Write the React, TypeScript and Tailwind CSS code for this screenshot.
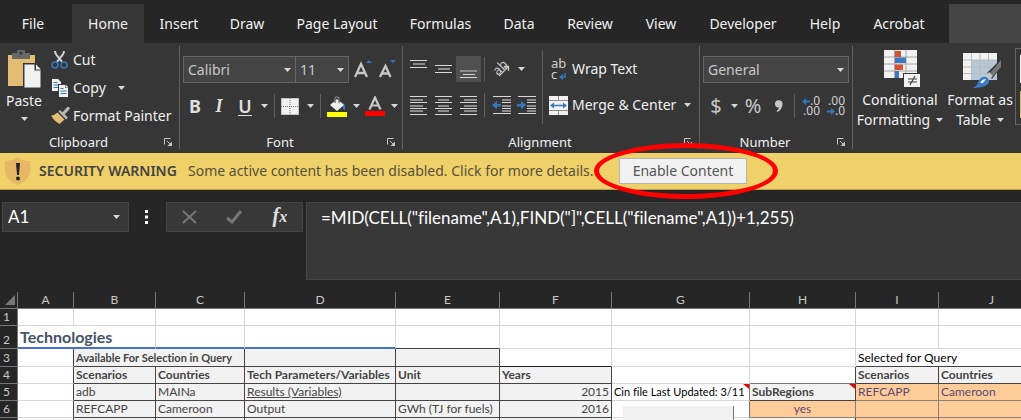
import type { ReactNode } from "react";

type Tab = { name: string; width: string };

const tabs: Tab[] = [
  { name: "File", width: "w-[66px] mr-[6px]" },
  { name: "Home", width: "w-[72px]" },
  { name: "Insert", width: "w-[70px]" },
  { name: "Draw", width: "w-[66px]" },
  { name: "Page Layout", width: "w-[114px]" },
  { name: "Formulas", width: "w-[93px]" },
  { name: "Data", width: "w-[64px]" },
  { name: "Review", width: "w-[78px]" },
  { name: "View", width: "w-[64px]" },
  { name: "Developer", width: "w-[100px]" },
  { name: "Help", width: "w-[64px]" },
  { name: "Acrobat", width: "w-[84px]" },
];

function Caret() {
  return (
    <svg width="7" height="4" viewBox="0 0 7 4" className="shrink-0" aria-hidden="true">
      <path d="M0 0h7L3.5 4z" fill="#d8d8d8" />
    </svg>
  );
}

function Launcher({ label }: { label: string }) {
  return (
    <button aria-label={label} className="absolute right-1.5 top-[5px]">
      <svg width="9" height="9" viewBox="0 0 9 9" fill="none" stroke="#c8c8c8">
        <path d="M.5 6.5v-6h6M3 3l4 4" />
        <path d="M8 3.5V8H3.5z" fill="#c8c8c8" stroke="none" />
      </svg>
    </button>
  );
}

function Group({ label, className, children }: { label: string; className: string; children: ReactNode }) {
  return (
    <section aria-label={label} className={`flex shrink-0 flex-col ${className}`}>
      <div className="h-[87px]">{children}</div>
      <div className="relative h-[18px] pr-[22px] text-center text-[13px] leading-[18px]">
        {label}
        <Launcher label={`${label} settings`} />
      </div>
    </section>
  );
}

function Divider({ className }: { className: string }) {
  return <div className={`w-px shrink-0 bg-[#5f5f5f] ${className}`} />;
}

function Choice({ label, value, className }: { label: string; value: string; className: string }) {
  return (
    <label className={`relative flex h-[27px] items-center border border-[#666] bg-[#444] ${className}`}>
      <select aria-label={label} className="h-full w-full appearance-none bg-transparent pl-1 text-sm text-[#c8c8c8] outline-none">
        <option>{value}</option>
      </select>
      <span className="pointer-events-none absolute right-1">
        <Caret />
      </span>
    </label>
  );
}

function Lines({ rows }: { rows: [number, number, number, boolean][] }) {
  return (
    <svg width="17" height="19" viewBox="0 0 17 19" aria-hidden="true">
      {rows.map(([y, x, w, dim]) => (
        <rect key={y} x={x} y={y} width={w} height={dim ? 2 : 1} fill={dim ? "#8c8c8c" : "#d8d8d8"} />
      ))}
    </svg>
  );
}

function LetterButton({ label, className, children }: { label: string; className: string; children: ReactNode }) {
  return (
    <button aria-label={label} className={`flex h-[26px] shrink-0 items-center justify-center ${className}`}>
      {children}
    </button>
  );
}

function PasteIcon() {
  return (
    <svg width="36" height="39" viewBox="0 0 36 39" aria-hidden="true">
      <path d="M2 5h27v31H2z" fill="#e3bd74" />
      <path d="M6 3h5V1q0-1 1-1h6q1 0 1 1v2h5v6H6z" fill="#686868" />
      <circle cx="15" cy="3" r="1.5" fill="#363636" />
      <path d="M17 13h13l6 6v19H17z" fill="#363636" />
      <path d="M18.500 14.500h10v6h6v17h-16z" fill="#f1f1f1" />
      <path d="M30 14.500v5h5z" fill="#f1f1f1" />
    </svg>
  );
}

function CutIcon() {
  return (
    <svg width="18" height="18" viewBox="0 0 18 18" fill="none" aria-hidden="true">
      <path d="M4 0c0 4 4 6 7 11M13 0c0 4-4 6-7 11" stroke="#cfcfcf" strokeWidth="2" />
      <circle cx="4" cy="14" r="3" stroke="#3577bd" strokeWidth="1.500" />
      <circle cx="13" cy="14" r="3" stroke="#3577bd" strokeWidth="1.500" />
    </svg>
  );
}

function CopyIcon() {
  return (
    <svg width="18" height="18" viewBox="0 0 18 18" aria-hidden="true">
      <path d="M1 0h6l3 3v9H1z" fill="#f1f1f1" />
      <path d="M2.500 3.500h4M2.500 6h6M2.500 8.500h6" stroke="#3577bd" />
      <path d="M7 5h8l3 3v10H7z" fill="#363636" />
      <path d="M8 6h6v3h3v9H8z" fill="#f1f1f1" />
      <path d="M14.500 5.500V8.500H17.500z" fill="#f1f1f1" />
      <path d="M9.500 9.500h3M9.500 12h6M9.500 14.500h6" stroke="#3577bd" />
    </svg>
  );
}

function PainterIcon() {
  return (
    <svg width="19" height="17" viewBox="0 0 19 17" aria-hidden="true">
      <path d="M0 8.500Q4 8 6.500 5.500L13.500 12.500 8.500 17Q3 14 0 8.500z" fill="#e3bd74" />
      <path d="M7.500 4.500l1.500-1.500 8 7.500-2 2z" fill="#b8b8b8" />
      <path d="M12.500 6.500l4.500-5" stroke="#b8b8b8" strokeWidth="3.200" strokeLinecap="round" />
    </svg>
  );
}

function ClipboardGroup() {
  return (
    <Group label="Clipboard" className="w-[179px]">
      <div className="flex h-full">
        <button className="flex w-[48px] shrink-0 flex-col items-center pt-1 text-sm leading-5">
          <PasteIcon />
          <span className="mt-0.5">Paste</span>
          <span className="mt-1.5 flex"><Caret /></span>
        </button>
        <div className="flex flex-col pl-[3px] text-sm">
          <button className="flex h-[28px] items-center gap-1"><CutIcon /> Cut</button>
          <button className="flex h-[28px] items-center gap-1"><CopyIcon /> Copy <span className="ml-2"><Caret /></span></button>
          <button className="flex h-[27px] items-center gap-[3px] whitespace-nowrap"><PainterIcon /> Format Painter</button>
        </div>
      </div>
    </Group>
  );
}

function BordersIcon() {
  return (
    <svg width="18" height="17" viewBox="0 0 18 17" aria-hidden="true">
      <path d="M0 0h18v17H0z" fill="#f1f1f1" />
      <path d="M9 0v17M0 8.500h18" stroke="#777" strokeDasharray="1 1" />
      <path d="M.5.5h17v16H.5z" fill="none" stroke="#999" strokeDasharray="1 1" />
    </svg>
  );
}

function FillIcon() {
  return (
    <svg width="20" height="21" viewBox="0 0 20 21" aria-hidden="true">
      <path d="M0 16h20v5H0z" fill="#ff0" />
      <path d="M14 6q5 1 4 8l-2-1q0-4-3-5z" fill="#3577bd" />
      <path d="M3 9l7-6 7 6-7 6z" fill="#efefef" />
      <path d="M8 7V3q0-2 2-2t2 2v4" fill="none" stroke="#777" strokeWidth="1.500" />
    </svg>
  );
}

function FontColorIcon() {
  return (
    <svg width="20" height="20" viewBox="0 0 20 20" aria-hidden="true">
      <path d="M4.500 13.500L10 1.500l5.500 12M6.500 9.500h7" fill="none" stroke="#c8c8c8" strokeWidth="2.200" />
      <path d="M0 15h20v5H0z" fill="red" />
    </svg>
  );
}

function SizeIcon({ grow }: { grow: boolean }) {
  return (
    <svg width="19" height="20" viewBox="0 0 19 20" fill="none" aria-hidden="true">
      <path d={grow ? "M1 18L7 5l6 13M3.5 14h7" : "M2 18L7.500 7l5 11M4 14.500h7"} stroke="#c8c8c8" strokeWidth="2.300" />
      <path d={grow ? "M12 4h6l-3-3z" : "M12 1h6l-3 3z"} fill="#3577bd" />
    </svg>
  );
}

function FontGroup() {
  return (
    <Group label="Font" className="w-[222px]">
      <div className="flex h-full flex-col pl-[3px] pt-[10px]">
        <div className="flex">
          <Choice label="Font name" value="Calibri" className="w-[113px]" />
          <Choice label="Font size" value="11" className="-ml-px w-[54px]" />
          <LetterButton label="Increase font size" className="ml-1 w-[20px]"><SizeIcon grow /></LetterButton>
          <LetterButton label="Decrease font size" className="ml-1 w-[20px]"><SizeIcon grow={false} /></LetterButton>
        </div>
        <div className="mt-[10px] flex items-center text-lg leading-6 text-[#dedede]">
          <LetterButton label="Bold" className="w-6"><b>B</b></LetterButton>
          <LetterButton label="Italic" className="w-6"><i className="font-['Liberation_Serif',serif] font-bold">I</i></LetterButton>
          <LetterButton label="Underline" className="w-7"><span className="border-b leading-[18px] font-semibold">U</span></LetterButton>
          <LetterButton label="Underline style" className="w-[10px]"><Caret /></LetterButton>
          <Divider className="ml-[5px] h-6" />
          <LetterButton label="Borders" className="ml-[6px] w-[18px]"><BordersIcon /></LetterButton>
          <LetterButton label="Border style" className="ml-[6px] w-[10px]"><Caret /></LetterButton>
          <Divider className="ml-[5px] h-6" />
          <LetterButton label="Fill color" className="ml-[6px] w-[20px]"><FillIcon /></LetterButton>
          <LetterButton label="Fill options" className="ml-1 w-[10px]"><Caret /></LetterButton>
          <LetterButton label="Font color" className="ml-1 w-[20px]"><FontColorIcon /></LetterButton>
          <LetterButton label="Font color options" className="ml-1 w-[10px]"><Caret /></LetterButton>
        </div>
      </div>
    </Group>
  );
}

function IndentIcon({ out }: { out: boolean }) {
  return (
    <svg width="19" height="19" viewBox="0 0 19 19" aria-hidden="true">
      <path d="M1 .5h18M10 6.500h9M10 12.500h9M1 17.500h18" stroke="#d8d8d8" />
      <path d="M10 4h9M10 10h9M10 15h9" stroke="#8c8c8c" strokeWidth="2" />
      <path d={out ? "M0 9l5-4v3h4v2.500H5v3z" : "M9 9L4 5v3H0v2.500h4v3z"} fill="#3577bd" />
    </svg>
  );
}

function MergeIcon() {
  return (
    <svg width="19" height="19" viewBox="0 0 19 19" aria-hidden="true">
      <path d="M0 0h19v19H0z" fill="#f1f1f1" />
      <path d="M0 4.500h19M0 14.500h19M9.500 0v4M9.500 15v4" stroke="#8c8c8c" />
      <path d="M3 9.500h13" stroke="#3577bd" strokeWidth="1.500" />
      <path d="M1 9.500L5 6.500v6zM18 9.500L14 6.500v6z" fill="#3577bd" />
    </svg>
  );
}

function AlignmentGroup() {
  return (
    <Group label="Alignment" className="w-[296px]">
      <div className="flex h-full">
        <div className="flex w-[139px] flex-col pl-[3px] pt-[10px]">
          <div className="flex items-center">
            <LetterButton label="Top align" className="w-[25px]"><Lines rows={[[0, 0, 17, false], [3, 3, 12, true], [7, 0, 17, false]]} /></LetterButton>
            <LetterButton label="Middle align" className="w-[25px]"><Lines rows={[[5, 0, 17, false], [8, 3, 12, true], [12, 0, 17, false]]} /></LetterButton>
            <LetterButton label="Bottom align" className="w-[25px] bg-[#505050]"><Lines rows={[[10, 0, 17, true], [14, 3, 12, false], [17, 0, 17, false]]} /></LetterButton>
            <Divider className="ml-[3px] h-6" />
            <LetterButton label="Orientation" className="relative ml-[7px] w-[20px] text-[13px] leading-4 text-[#c8c8c8]">
              <span className="-mt-1 mr-1 block -rotate-45">ab</span>
              <svg width="12" height="12" viewBox="0 0 12 12" fill="none" stroke="#c8c8c8" strokeWidth="1.300" className="absolute bottom-[5px] right-0.5" aria-hidden="true">
                <path d="M1 11L11 1M6 1.500h4.500V6" />
              </svg>
            </LetterButton>
            <LetterButton label="Orientation options" className="ml-1 w-[10px]"><Caret /></LetterButton>
          </div>
          <div className="mt-[10px] flex items-center">
            <LetterButton label="Align left" className="w-[25px]"><Lines rows={[[0, 0, 17, false], [3, 0, 13, true], [6, 0, 17, false], [9, 0, 13, true], [12, 0, 17, false], [14, 0, 13, true], [18, 0, 17, false]]} /></LetterButton>
            <LetterButton label="Center" className="w-[25px]"><Lines rows={[[0, 0, 17, false], [3, 3, 11, true], [6, 0, 17, false], [9, 3, 11, true], [12, 0, 17, false], [14, 3, 11, true], [18, 0, 17, false]]} /></LetterButton>
            <LetterButton label="Align right" className="w-[25px]"><Lines rows={[[0, 0, 17, false], [3, 4, 13, true], [6, 0, 17, false], [9, 4, 13, true], [12, 0, 17, false], [14, 4, 13, true], [18, 0, 17, false]]} /></LetterButton>
            <Divider className="ml-[3px] h-6" />
            <LetterButton label="Decrease indent" className="ml-[6px] w-[20px]"><IndentIcon out /></LetterButton>
            <LetterButton label="Increase indent" className="ml-[5px] w-[20px]"><IndentIcon out={false} /></LetterButton>
          </div>
        </div>
        <Divider className="mt-[5px] h-[73px]" />
        <div className="flex flex-col pl-[6px] pt-[10px] text-sm">
          <button className="flex h-[26px] items-center gap-1">
            <span className="relative w-[19px] pl-[2px] text-left text-[13px] leading-[11px] text-[#d0d0d0]">
              ab<br />c
              <svg width="7" height="7" viewBox="0 0 7 7" className="absolute bottom-0 right-[2px]" aria-hidden="true">
                <path d="M6 0v4H3" fill="none" stroke="#3577bd" strokeWidth="1.500" />
                <path d="M0 4l4-3v6z" fill="#3577bd" />
              </svg>
            </span>
            Wrap Text
          </button>
          <button className="mt-[10px] flex h-[26px] items-center gap-1 whitespace-nowrap">
            <MergeIcon /> Merge &amp; Center <span className="ml-1"><Caret /></span>
          </button>
        </div>
      </div>
    </Group>
  );
}

function DecimalIcon({ more }: { more: boolean }) {
  const arrow = (
    <svg width="8" height="7" viewBox="0 0 8 7" className="shrink-0" aria-hidden="true">
      <path d={more ? "M0 3.500L4 0v2.500h4v2H4V7z" : "M8 3.500L4 0v2.500H0v2h4V7z"} fill="#3577bd" />
    </svg>
  );
  return (
    <span className="flex flex-col items-end text-xs leading-[10px] text-[#d0d0d0]">
      <span className="flex items-center">{more && arrow}{more ? ".0" : ".00"}</span>
      <span className="flex items-center">{!more && arrow}{more ? ".00" : ".0"}</span>
    </span>
  );
}

function NumberGroup() {
  return (
    <Group label="Number" className="w-[152px]">
      <div className="flex h-full flex-col pl-[3px] pt-[10px]">
        <Choice label="Number format" value="General" className="w-[146px]" />
        <div className="mt-[10px] flex items-center text-xl text-[#c8c8c8]">
          <LetterButton label="Accounting format" className="w-[26px]">$</LetterButton>
          <LetterButton label="Accounting options" className="w-[10px]"><Caret /></LetterButton>
          <LetterButton label="Percent style" className="w-[28px]">%</LetterButton>
          <LetterButton label="Comma style" className="w-[24px]">
            <svg width="8" height="12" viewBox="0 0 8 12" aria-hidden="true">
              <path d="M0 4a3.700 3.700 0 0 1 7.500 0q0 5-5 8l-1-1q2.500-2 2.500-3.500Q0 7.500 0 4z" fill="#c8c8c8" />
            </svg>
          </LetterButton>
          <Divider className="ml-[3px] h-6" />
          <LetterButton label="Increase decimal" className="ml-1 w-[24px]"><DecimalIcon more /></LetterButton>
          <LetterButton label="Decrease decimal" className="w-[26px]"><DecimalIcon more={false} /></LetterButton>
        </div>
      </div>
    </Group>
  );
}

function StylesGroup() {
  return (
    <section aria-label="Styles" className="flex min-w-0 flex-1 overflow-hidden text-sm leading-5">
      <button className="flex w-[94px] shrink-0 flex-col items-center pt-1">
        <svg width="36" height="38" viewBox="0 0 36 38" className="ml-1" aria-hidden="true">
          <path d="M0 0h33v28H0z" fill="#f1f1f1" />
          <path d="M0 7h33M0 14h33M0 21h33M10.500 0v28M22 0v28" stroke="#a8a8a8" />
          <path d="M11 1h6v6h-6zM11 14.500h8V20h-8z" fill="#d35230" />
          <path d="M11 7.500h11V13H11zM11 21h4v7h-4z" fill="#3a7bc4" />
          <path d="M19 23h17v15H19z" fill="#363636" />
          <path d="M20 24h16v13H20z" fill="#f1f1f1" />
          <path d="M24 29h9M24 32h9M31 26l-5 9" stroke="#444" strokeWidth="1.200" />
        </svg>
        <span className="mt-0.5">Conditional</span>
        <span className="flex items-center gap-1.5">Formatting <Caret /></span>
      </button>
      <button className="flex w-[66px] shrink-0 flex-col items-center whitespace-nowrap pt-1">
        <svg width="38" height="38" viewBox="0 0 38 38" className="ml-1" aria-hidden="true">
          <path d="M0 3h34v27H0z" fill="#f1f1f1" />
          <path d="M9 10h25v20H9z" fill="#b5c8da" />
          <path d="M0 10h34M0 17h34M0 23.500h34M8.500 3v27M17 3v27M25.500 3v27" stroke="#bbb" />
          <path d="M38 9L24 23l5 6 9-12z" fill="#363636" />
          <path d="M38 10L27 23l3 3 8-9z" fill="#777" />
          <path d="M26 22l-3 4 4 3 3-3z" fill="#c8c8c8" />
          <path d="M9 38q5-1 6-6 3-6 8-5 5 3 2 7-4 4-16 4z" fill="#3a7bc4" />
          <path d="M17 33q2-4 6-4l-3 4z" fill="#f1f1f1" />
        </svg>
        <span className="mt-0.5">Format as</span>
        <span className="flex items-center gap-1.5">Table <Caret /></span>
      </button>
      <div className="ml-[2px] mt-[2px] flex h-[77px] flex-1 flex-col gap-2 border border-r-0 border-[#666] py-[6px] pl-1">
        <div className="flex-1 bg-[#f1f1f1]" />
        <div className="flex-1 bg-[#d8bc6c]" />
      </div>
    </section>
  );
}

function SecurityBar() {
  return (
    <div className="flex h-[37px] shrink-0 items-center border-b border-[#b89f55] bg-[#f0d068] pl-[5px] text-sm text-[#55513f]">
      <svg width="25" height="28" viewBox="0 0 25 28" className="shrink-0" aria-hidden="true">
        <path d="M12.500 0Q17 4 25 4v9q0 10-12.500 15Q0 23 0 13V4q8 0 12.500-4z" fill="#e6b866" />
        <path d="M11 6h4l-1 12h-2z" fill="#262626" />
        <circle cx="13" cy="21.500" r="2" fill="#262626" />
      </svg>
      <strong className="ml-[9px] w-[149px] shrink-0 whitespace-nowrap font-semibold text-[#444]">SECURITY WARNING</strong>
      <a href="#details" className="w-[431px] shrink-0 whitespace-nowrap">Some active content has been disabled. Click for more details.</a>
      <div className="relative shrink-0">
        <button className="block h-[26px] w-[128px] border border-[#b5b5b5] bg-[#f1f1f1] leading-5 text-[#555]">Enable Content</button>
        <div className="pointer-events-none absolute -left-[25px] -top-[15px] h-[56px] w-[184px] rounded-[50%] border-[5px] border-[#ff0000]" />
      </div>
    </div>
  );
}

function FormulaBar() {
  return (
    <div className="flex shrink-0 items-start pb-3 pl-[2px] pt-3 font-['Lato',sans-serif] text-white">
      <label className="relative flex h-[30px] w-[127px] shrink-0 items-center border border-[#444] bg-[#383838]">
        <input aria-label="Name box" defaultValue="A1" className="w-full bg-transparent pl-[5px] text-[17px] leading-6 outline-none" />
        <span className="absolute right-2"><Caret /></span>
      </label>
      <svg width="3" height="14" viewBox="0 0 3 14" className="ml-4 mt-2 shrink-0" aria-hidden="true">
        <path d="M0 0h3v3H0zM0 5.500h3v3H0zM0 11h3v3H0z" fill="#fff" />
      </svg>
      <div className="ml-[18px] flex h-[30px] w-[137px] shrink-0 items-center justify-around border border-[#444] bg-[#383838]">
        <button aria-label="Cancel">
          <svg width="15" height="14" viewBox="0 0 15 14" fill="none" stroke="#777" strokeWidth="2"><path d="M1 1l13 12M14 1L1 13" /></svg>
        </button>
        <button aria-label="Enter">
          <svg width="17" height="14" viewBox="0 0 17 14" fill="none" stroke="#777" strokeWidth="3"><path d="M1 8l5 4L15 1" /></svg>
        </button>
        <button className="font-['Liberation_Serif',serif] text-xl font-bold italic leading-5 text-[#e0e0e0]">f<span className="text-base">x</span></button>
      </div>
      <textarea
        aria-label="Formula"
        defaultValue={'=MID(CELL("filename",A1),FIND("]",CELL("filename",A1))+1,255)'}
        className="ml-[3px] block h-[78px] min-w-0 flex-1 resize-none border border-r-0 border-[#444] bg-[#383838] px-[14px] py-[3px] text-[17px] leading-6 outline-none [font-variant-ligatures:none]"
      />
    </div>
  );
}

const columns = ["A", "B", "C", "D", "E", "F", "G", "H", "I", "J"];
const light = "border-[#d6d6d6] bg-white";
const boxed = "border-[#444] bg-[#f2f2f2] text-[#444]";
const boxedRight = "border-[#444] bg-[#f2f2f2] text-[#444] text-right";
const heading = "border-[#444] bg-[#f2f2f2] text-[#444] font-bold";
const orange = "border-[#8a8175] bg-[#ffcc99] text-[#5a4a72]";
const orangeCenter = "border-[#8a8175] bg-[#ffcc99] text-[#5a4a72] text-center";
const edge = "border-b-[#d6d6d6] border-r-[#444] bg-white";
const titleCell = "border-b-2 border-b-[#4472c4] border-r-[#d6d6d6] bg-white";

function Cell({ className = light, span, children }: { className?: string; span?: number; children?: ReactNode }) {
  return <td colSpan={span} className={`relative whitespace-nowrap border-b border-r px-[2px] py-0 ${className}`}>{children}</td>;
}

function RowHead({ n }: { n?: number }) {
  return <th scope="row" className="border-b border-r border-[#777] bg-[#262626] p-0 pr-1 text-center align-bottom font-normal text-[#c8c8c8]">{n}</th>;
}

function Blanks({ count }: { count: number }) {
  return <>{Array.from({ length: count }, (_, i) => <Cell key={i} />)}</>;
}

function NoteMark() {
  return (
    <svg width="6" height="5" viewBox="0 0 6 5" className="absolute right-0 top-0" aria-hidden="true">
      <path d="M0 0h6v5z" fill="#e00" />
    </svg>
  );
}

function Sheet() {
  return (
    <table className="w-[1045px] table-fixed border-separate border-spacing-0 font-['Lato',sans-serif] text-xs leading-4 text-black [font-variant-ligatures:none]">
      <colgroup>
        <col className="w-[18px]" /><col className="w-[56px]" /><col className="w-[82px]" /><col className="w-[89px]" /><col className="w-[151px]" />
        <col className="w-[104px]" /><col className="w-[112px]" /><col className="w-[138px]" /><col className="w-[106px]" /><col className="w-[83px]" /><col className="w-[106px]" />
      </colgroup>
      <thead>
        <tr className="h-[17px] bg-[#262626] text-[#c8c8c8]">
          <th className="border-b border-r border-[#777] p-0">
            <svg width="10" height="10" viewBox="0 0 10 10" className="ml-[5px]" aria-hidden="true"><path d="M10 0v10H0z" fill="#777" /></svg>
          </th>
          {columns.map((c) => <th key={c} scope="col" className="border-b border-r border-[#777] p-0 font-normal">{c}</th>)}
        </tr>
      </thead>
      <tbody>
        <tr className="h-[17px]"><RowHead n={1} /><Blanks count={10} /></tr>
        <tr className="h-[23px]">
          <RowHead n={2} />
          <Cell span={2} className={`${titleCell} text-base font-bold leading-5 text-[#44546a]`}>Technologies</Cell>
          <Cell className={titleCell} />
          <Cell className={titleCell} />
          <Cell className="border-b-[#444] border-r-[#d6d6d6] bg-white" />
          <Blanks count={5} />
        </tr>
        <tr className="h-[18px]">
          <RowHead n={3} />
          <Cell className={edge} />
          <Cell span={2} className={heading}><span className="text-[11px]">Available For Selection in Query</span></Cell>
          <Cell className={boxed} /><Cell className={boxed} />
          <Cell className="border-b-[#222] border-r-[#d6d6d6] bg-white" />
          <Blanks count={2} />
          <Cell span={2} className="border-b-[#444] border-r-[#d6d6d6] bg-white">Selected for Query</Cell>
        </tr>
        <tr className="h-[17px]">
          <RowHead n={4} />
          <Cell className={edge} />
          <Cell className={heading}>Scenarios</Cell>
          <Cell className={heading}>Countries</Cell>
          <Cell className={heading}>Tech Parameters/Variables</Cell>
          <Cell className={heading}>Unit</Cell>
          <Cell className={heading}>Years</Cell>
          <Cell />
          <Cell className="border-b-[#777] border-r-[#444] bg-white" />
          <Cell className={heading}>Scenarios</Cell>
          <Cell className={heading}>Countries</Cell>
        </tr>
        <tr className="h-[16px]">
          <RowHead n={5} />
          <Cell className={edge} />
          <Cell className={boxed}>adb</Cell>
          <Cell className={boxed}>MAINa</Cell>
          <Cell className={boxed}><span className="underline">Results (Variables)</span></Cell>
          <Cell className={boxed} />
          <Cell className={boxedRight}>2015</Cell>
          <Cell className="border-b-[#d6d6d6] border-r-[#777] bg-white"><span className="text-[11px]">Cin file Last Updated: 3/11</span><NoteMark /></Cell>
          <Cell className={heading}>SubRegions<NoteMark /></Cell>
          <Cell className={orange}>REFCAPP</Cell>
          <Cell className={orange}>Cameroon</Cell>
        </tr>
        <tr className="h-[17px]">
          <RowHead n={6} />
          <Cell className={edge} />
          <Cell className={boxed}>REFCAPP</Cell>
          <Cell className={boxed}>Cameroon</Cell>
          <Cell className={boxed}>Output</Cell>
          <Cell className={boxed}>GWh (TJ for fuels)</Cell>
          <Cell className={boxedRight}>2016</Cell>
          <Cell className="border-b-[#d6d6d6] border-r-[#777] bg-white">
            <div className="absolute left-[11px] top-[5px] z-10 h-8 w-[111px] border-r border-[#777] bg-[#f0f0f0]" />
          </Cell>
          <Cell className={orangeCenter}>yes</Cell>
          <Cell className={orange} /><Cell className={orange} />
        </tr>
        <tr className="h-[17px]">
          <RowHead />
          <Cell className={edge} />
          <Cell className={boxed} /><Cell className={boxed} /><Cell className={boxed} /><Cell className={boxed} /><Cell className={boxed} />
          <Cell />
          <Cell className={boxed} />
          <Cell className={orange} /><Cell className={orange} />
        </tr>
      </tbody>
    </table>
  );
}

export default function App() {
  return (
    <main className="flex h-screen flex-col overflow-hidden bg-[#262626] font-['Noto_Sans','Open_Sans',sans-serif] text-[#f0f0f0]">
      <nav aria-label="Ribbon tabs" className="flex h-[43px] shrink-0 pt-1 text-sm">
        {tabs.map((t) => (
          <button key={t.name} className={`shrink-0 whitespace-nowrap ${t.width} ${t.name === "Home" ? "bg-[#363636]" : ""}`}>{t.name}</button>
        ))}
        <div className="ml-2 flex-1 bg-[#444]" />
      </nav>
      <div className="flex h-[110px] shrink-0 bg-[#363636] pt-[3px]">
        <ClipboardGroup />
        <Divider className="h-[103px]" />
        <FontGroup />
        <Divider className="h-[103px]" />
        <AlignmentGroup />
        <Divider className="h-[103px]" />
        <NumberGroup />
        <Divider className="h-[103px]" />
        <StylesGroup />
      </div>
      <SecurityBar />
      <FormulaBar />
      <Sheet />
    </main>
  );
}
